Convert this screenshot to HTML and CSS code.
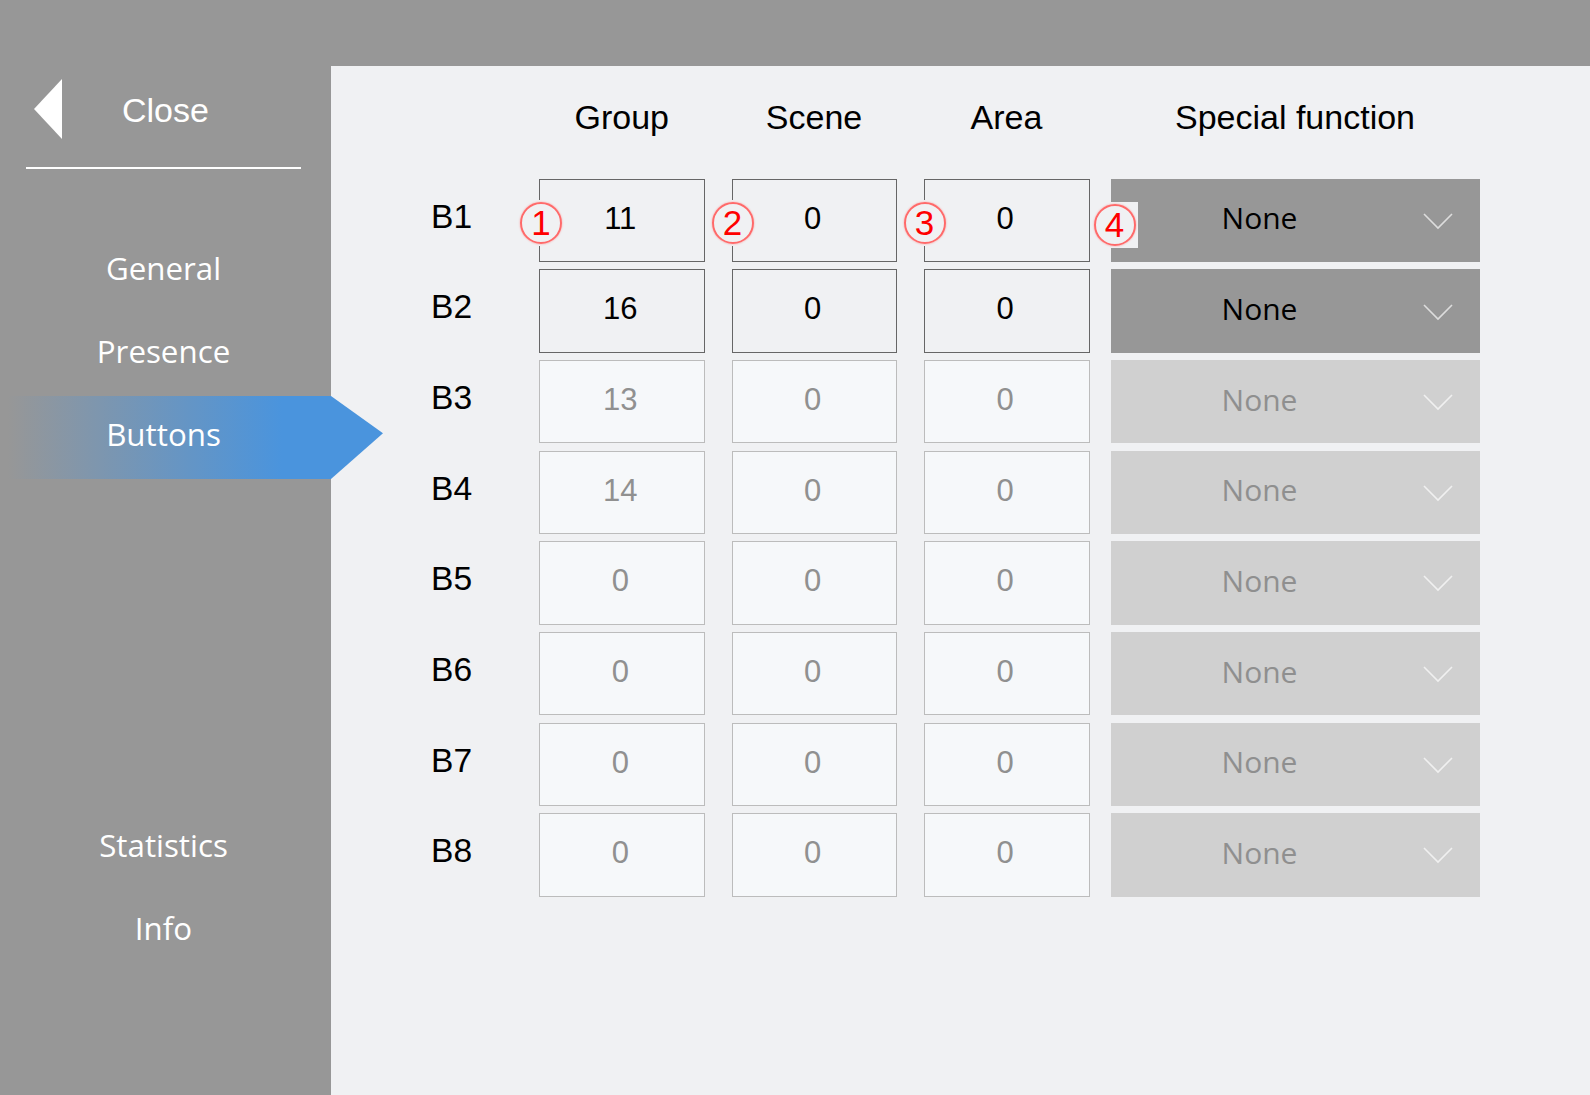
FILE: index.html
```html
<!DOCTYPE html>
<html lang="en">
<head>
<meta charset="utf-8">
<title>Buttons</title>
<link rel="stylesheet" href="styles.css">
</head>
<body>
<div class="app">
  <aside class="sidebar">
    <div class="close">
      <svg class="close-arrow" width="28" height="60" viewBox="0 0 28 60"><polygon points="28,0 28,60 0,30" fill="#fff"/></svg>
      <span class="close-label">Close</span>
    </div>
    <nav class="nav">
      <div class="nav-item">General</div>
      <div class="nav-item">Presence</div>
      <div class="nav-item active">Buttons</div>
    </nav>
    <nav class="nav nav-bottom">
      <div class="nav-item">Statistics</div>
      <div class="nav-item">Info</div>
    </nav>
  </aside>
  <main class="panel">
    <div class="grid">
      <div class="head-spacer"></div>
      <div class="head">Group</div>
      <div class="head">Scene</div>
      <div class="head">Area</div>
      <div class="head head-wide">Special function</div>

      <div class="label">B1</div>
      <div class="field on">11<span class="mark m1"><span class="ring">1</span></span></div>
      <div class="field on">0<span class="mark m2"><span class="ring">2</span></span></div>
      <div class="field on">0<span class="mark m2"><span class="ring">3</span></span></div>
      <div class="select on"><span class="sel-text">None</span><svg class="chev" width="30" height="17" viewBox="0 0 30 17"><path d="M1 1 L15 15 L29 1" fill="none" stroke-width="1.6"/></svg><span class="mark m4"><span class="ring">4</span></span></div>

      <div class="label">B2</div>
      <div class="field on">16</div>
      <div class="field on">0</div>
      <div class="field on">0</div>
      <div class="select on"><span class="sel-text">None</span><svg class="chev" width="30" height="17" viewBox="0 0 30 17"><path d="M1 1 L15 15 L29 1" fill="none" stroke-width="1.6"/></svg></div>

      <div class="label">B3</div>
      <div class="field">13</div>
      <div class="field">0</div>
      <div class="field">0</div>
      <div class="select"><span class="sel-text">None</span><svg class="chev" width="30" height="17" viewBox="0 0 30 17"><path d="M1 1 L15 15 L29 1" fill="none" stroke-width="1.6"/></svg></div>

      <div class="label">B4</div>
      <div class="field">14</div>
      <div class="field">0</div>
      <div class="field">0</div>
      <div class="select"><span class="sel-text">None</span><svg class="chev" width="30" height="17" viewBox="0 0 30 17"><path d="M1 1 L15 15 L29 1" fill="none" stroke-width="1.6"/></svg></div>

      <div class="label">B5</div>
      <div class="field">0</div>
      <div class="field">0</div>
      <div class="field">0</div>
      <div class="select"><span class="sel-text">None</span><svg class="chev" width="30" height="17" viewBox="0 0 30 17"><path d="M1 1 L15 15 L29 1" fill="none" stroke-width="1.6"/></svg></div>

      <div class="label">B6</div>
      <div class="field">0</div>
      <div class="field">0</div>
      <div class="field">0</div>
      <div class="select"><span class="sel-text">None</span><svg class="chev" width="30" height="17" viewBox="0 0 30 17"><path d="M1 1 L15 15 L29 1" fill="none" stroke-width="1.6"/></svg></div>

      <div class="label">B7</div>
      <div class="field">0</div>
      <div class="field">0</div>
      <div class="field">0</div>
      <div class="select"><span class="sel-text">None</span><svg class="chev" width="30" height="17" viewBox="0 0 30 17"><path d="M1 1 L15 15 L29 1" fill="none" stroke-width="1.6"/></svg></div>

      <div class="label">B8</div>
      <div class="field">0</div>
      <div class="field">0</div>
      <div class="field">0</div>
      <div class="select"><span class="sel-text">None</span><svg class="chev" width="30" height="17" viewBox="0 0 30 17"><path d="M1 1 L15 15 L29 1" fill="none" stroke-width="1.6"/></svg></div>
    </div>
  </main>
</div>
</body>
</html>
```

FILE: styles.css
```css
* { box-sizing: border-box; }
html, body { margin: 0; height: 100%; }
body { background: #979797; overflow: hidden; font-family: "Liberation Sans", Arial, sans-serif; }

.app {
  display: flex;
  height: 1095px;
  padding-top: 66px;
}

/* sidebar */
.sidebar {
  width: 331px;
  flex: none;
  display: flex;
  flex-direction: column;
  color: #fff;
}
.close {
  display: flex;
  align-items: center;
  margin: 14px 30px 0 26px;
  padding: 0 0 29px 8px;
  height: 89px;
  border-bottom: 2px solid #fff;
}
.close-label {
  font-size: 34px;
  margin-left: 60px;
  margin-top: 2px;
}
.close-arrow { flex: none; }

.nav { display: flex; flex-direction: column; }
.close + .nav { margin-top: 61px; }
.nav-bottom { margin-top: 328px; }
.nav-item {
  width: 327px;
  height: 83px;
  line-height: 76px;
  text-align: center;
  font-family: "Open Sans", sans-serif;
  font-size: 31.3px;
}
.nav-item.active {
  width: 383px;
  padding-right: 56px;
  background: linear-gradient(90deg, #979797 8px, #4a94dd 282px);
  clip-path: polygon(0 0, 331px 0, 100% 45%, 331px 100%, 0 100%);
}

/* panel */
.panel {
  flex: 1;
  background: #f0f1f3;
  padding: 29px 0 0 100px;
}
.grid {
  display: grid;
  grid-template-columns: 81px 165.5px 165px 166px 363px;
  column-gap: 27px;
  row-gap: 7.37px;
  grid-template-rows: 76.35px;
  grid-auto-rows: 83.3px;
}
.head {
  font-size: 34px;
  line-height: 45px;
  text-align: center;
  color: #000;
}
.head-wide { margin-left: -6px; }

.label {
  font-size: 33.6px;
  line-height: 76px;
  color: #000;
}

.field {
  position: relative;
  border: 1px solid #bcbcbc;
  background: #f6f8fa;
  color: #909090;
  font-size: 31px;
  line-height: 78px;
  text-align: center;
  padding-right: 3px;
}
.field.on {
  border-color: #666;
  background: #f0f1f3;
  color: #000;
}

.select {
  position: relative;
  margin-left: -6px;
  display: flex;
  align-items: center;
  background: #d0d0d0;
  color: #8f8f8f;
  padding-right: 27px;
}
.select.on { background: #979797; color: #000; }
.sel-text {
  flex: 1;
  text-align: center;
  font-family: "Open Sans", sans-serif;
  font-size: 30px;
  line-height: 73px;
  height: 78px;
}
.chev { flex: none; margin-left: 14px; margin-top: 2px; stroke: #f0f0f0; }
.select.on .chev { stroke: #ddd; }

/* red callout markers */
.mark {
  position: absolute;
  width: 46px;
  height: 46px;
  display: flex;
  align-items: center;
  justify-content: center;
  background: #f0f1f3;
}
.m1 { left: -22px; top: 20px; }
.m2 { left: -23px; top: 20px; }
.m4 { left: -19px; top: 23px; }
.ring {
  width: 42px;
  height: 42px;
  border-radius: 50%;
  border: 2px solid #ff6a6a;
  box-shadow: 0 0 2px #ff9a9a;
  color: #f00;
  font-family: "Liberation Sans", Arial, sans-serif;
  font-size: 35px;
  line-height: 38px;
  text-align: center;
}
```
